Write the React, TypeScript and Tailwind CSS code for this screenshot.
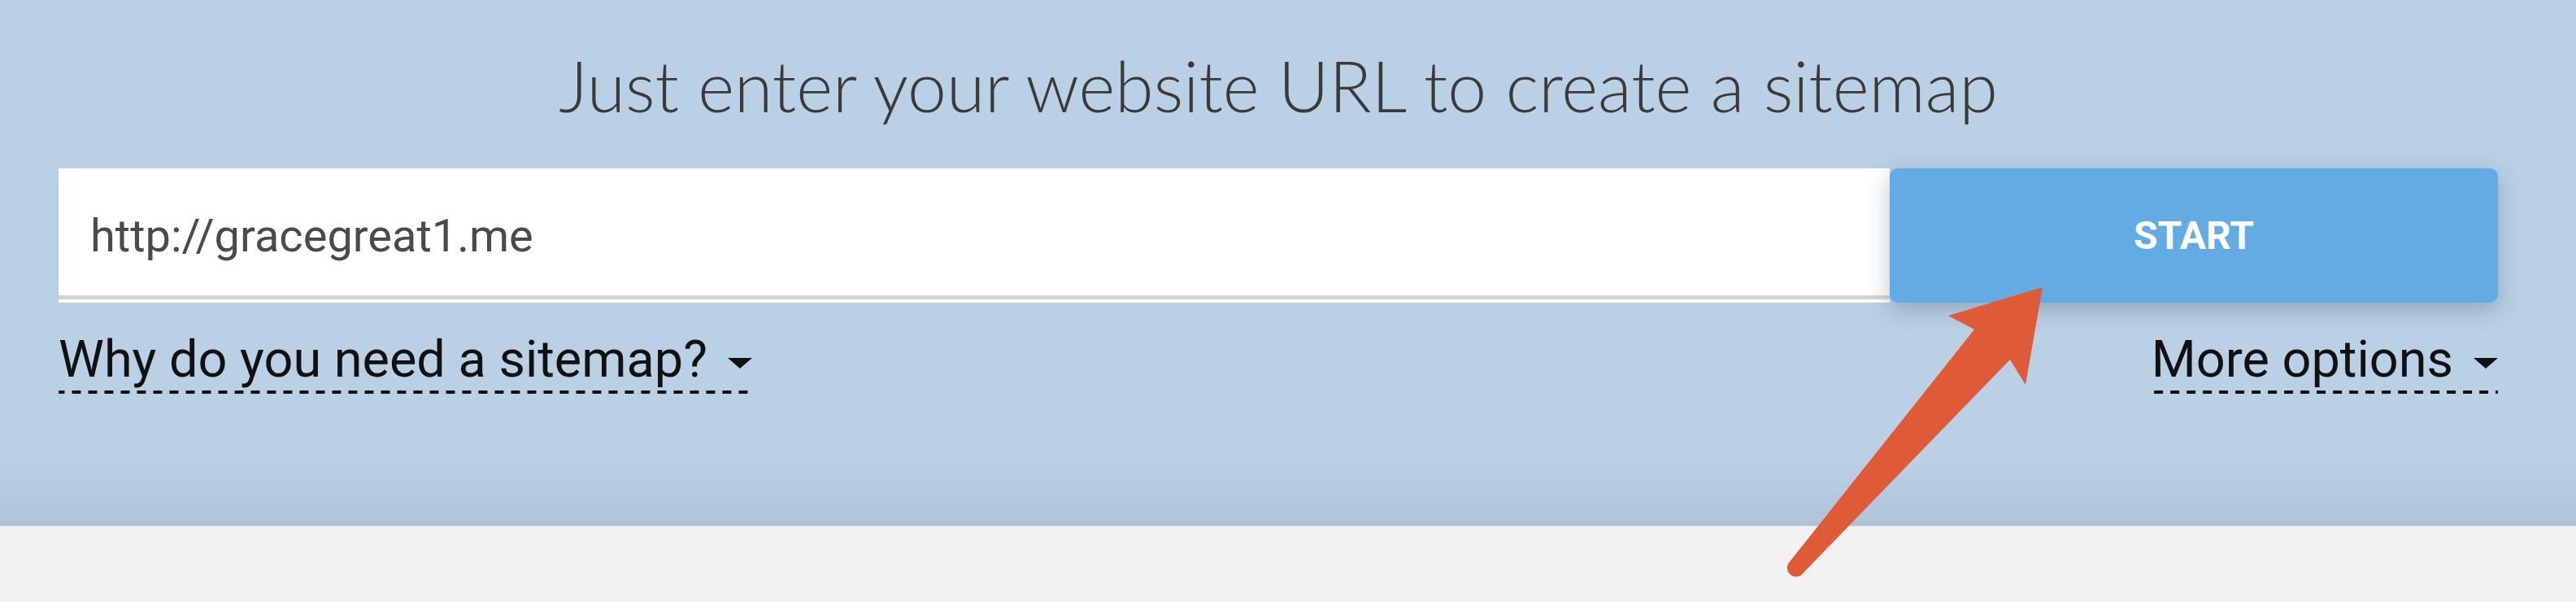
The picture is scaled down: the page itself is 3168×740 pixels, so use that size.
import { useState } from 'react';

function Caret() {
  return (
    <svg width="30" height="13" viewBox="0 0 30 13" className="ml-[25px] mb-[26px] shrink-0">
      <path d="M0 0 L30 0 L15 13 Z" fill="#111" />
    </svg>
  );
}

function DropLink({ label }: { label: string }) {
  return (
    <button className="flex items-end pb-[5px] bg-[linear-gradient(to_right,#111_55%,transparent_55%)] bg-[length:20px_4px] bg-bottom bg-repeat-x font-['Roboto'] text-[63px] leading-[75px] text-[#111]">
      <span>{label}</span>
      <Caret />
    </button>
  );
}

export default function App() {
  const [url, setUrl] = useState('http://gracegreat1.me');

  return (
    <div className="relative w-[3168px] h-[740px] overflow-hidden bg-[#f2f2f2]">
      <section className="h-[647px] bg-[linear-gradient(to_bottom,#bad0e4_0%,#bad0e4_88%,#afc4d9_100%)] border-b border-[#c9d6e3]">
        <div className="ml-[72px] w-[3000px] pt-[61px]">
          <h1 className="text-center font-['Lato'] font-light text-[86px] leading-[88px] text-[#3a3a3a]">
            Just enter your website URL to create a sitemap
          </h1>

          <div className="mt-[58px] flex">
            <div className="flex-1 bg-white pb-[4px]">
              <input
                type="text"
                value={url}
                onChange={(e) => setUrl(e.target.value)}
                className="w-full h-[161px] pl-[39px] pt-[10px] border-b-[5px] border-[#d4d4d4] bg-white font-['Roboto'] text-[56px] text-[#4a4a4a] outline-none"
              />
            </div>
            <button className="relative z-10 w-[748px] h-[165px] rounded-[10px] bg-[#62ace3] shadow-[0_8px_28px_rgba(40,70,110,0.3)] font-['Roboto'] font-bold text-[48px] text-white">
              START
            </button>
          </div>

          <div className="mt-[32px] flex justify-between items-start">
            <DropLink label="Why do you need a sitemap?" />
            <DropLink label="More options" />
          </div>
        </div>
      </section>

      <svg
        className="absolute left-[2150px] top-[340px] z-20"
        width="400"
        height="400"
        viewBox="0 0 400 400"
      >
        <path
          d="M362 13 L246 48 L278 65 L49 353 A11 11 0 0 0 65 367 L322 102 L341 133 Z"
          fill="#df5b38"
        />
      </svg>
    </div>
  );
}
